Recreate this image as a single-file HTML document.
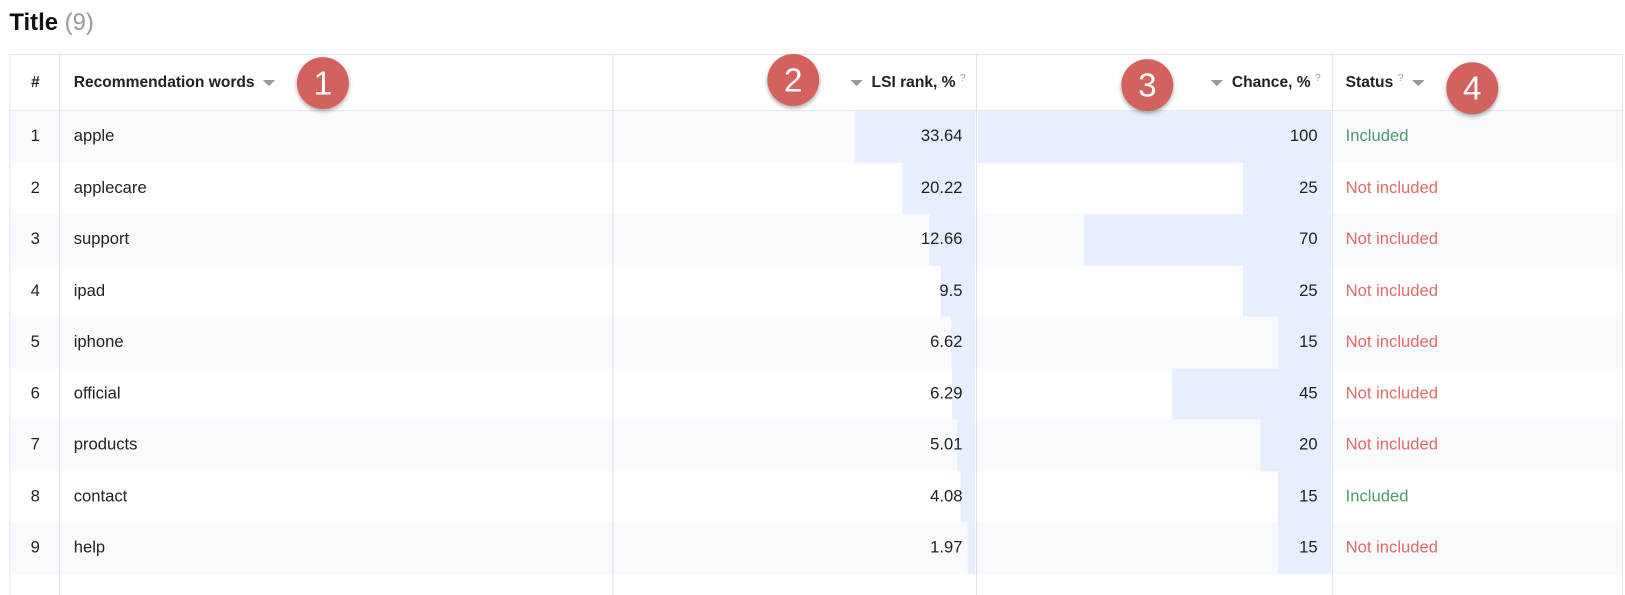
<!DOCTYPE html>
<html><head><meta charset="utf-8"><style>
body{margin:0;background:#fff;font-family:"Liberation Sans",Arial,sans-serif;width:1625px;height:568px;overflow:hidden;position:relative;color:#222}
#w{position:absolute;left:0;top:0;width:1565px;height:547px;transform:scale(1.0383);transform-origin:0 0}
.t{position:absolute;left:9px;top:8px;font-size:23px;font-weight:bold;color:#111}
.t span{color:#999;font-weight:normal}
.tb{position:absolute;left:9px;top:52px;width:1552px;height:520px;border:1px solid #dde4ef;border-bottom:none}
.hd{position:absolute;left:0;top:0;width:1552px;height:53px;border-bottom:2px solid #e3e9f3;font-size:15px;font-weight:bold;color:#222}
.vl{position:absolute;top:0;width:1px;height:520px;background:#dde4ef}
.row{position:absolute;left:0;width:1552px;height:49.5px;font-size:16px}
.row.o{background:#f8fafe}
.c{position:absolute;top:0;height:100%;line-height:49px}
.bar{position:absolute;top:0;height:100%;background:#e7eefd}
.tri{display:inline-block;width:0;height:0;border-left:6px solid transparent;border-right:6px solid transparent;border-top:6px solid #999;vertical-align:middle;margin:0 4px}
sup{color:#999;font-size:10px;font-weight:normal;line-height:0}
.bd{position:absolute;width:50px;height:50px;border-radius:50%;background:#d3625f;color:#fff;font-size:32px;text-align:center;line-height:50px;box-shadow:0 2px 4px rgba(0,0,0,.35)}
.g{color:#4f9a6b}.r{color:#e06a6a}
</style></head><body><div id="w">
<div class="t">Title <span>(9)</span></div>
<div class="tb">
<div class="hd">
<div class="c" style="left:0;width:48px;text-align:center;line-height:53px">#</div>
<div class="c" style="left:61px;line-height:53px">Recommendation words <span class="tri"></span></div>
<div class="c" style="right:632px;line-height:53px"><span class="tri"></span> LSI rank, % <sup>?</sup></div>
<div class="c" style="right:290px;line-height:53px"><span class="tri"></span> Chance, % <sup>?</sup></div>
<div class="c" style="left:1286px;line-height:53px">Status <sup>?</sup> <span class="tri"></span></div>
</div>
<div id="rows"></div>
<div class="vl" style="left:47px"></div>
<div class="vl" style="left:580px"></div>
<div class="vl" style="left:930px"></div>
<div class="vl" style="left:1273px"></div>
</div>
<div class="bd" style="left:286px;top:55px">1</div>
<div class="bd" style="left:739px;top:52px">2</div>
<div class="bd" style="left:1080px;top:57px">3</div>
<div class="bd" style="left:1393px;top:60px">4</div>
</div>
<script>
var d=[["apple",33.64,100,1],["applecare",20.22,25,0],["support",12.66,70,0],["ipad",9.5,25,0],["iphone",6.62,15,0],["official",6.29,45,0],["products",5.01,20,0],["contact",4.08,15,1],["help",1.97,15,0]];
var h="";d.forEach(function(r,i){var top=54+i*49.5;
h+='<div class="row'+(i%2==0?' o':'')+'" style="top:'+top+'px">'+
'<div class="bar" style="left:'+(929-r[1]*3.45)+'px;width:'+(r[1]*3.45)+'px"></div>'+
'<div class="bar" style="left:'+(1272-r[2]*3.4)+'px;width:'+(r[2]*3.4)+'px"></div>'+
'<div class="c" style="left:0;width:48px;text-align:center">'+(i+1)+'</div>'+
'<div class="c" style="left:61px">'+r[0]+'</div>'+
'<div class="c" style="right:635px">'+r[1]+'</div>'+
'<div class="c" style="right:293px">'+r[2]+'</div>'+
'<div class="c '+(r[3]?'g':'r')+'" style="left:1286px">'+(r[3]?'Included':'Not included')+'</div></div>';});
document.getElementById('rows').innerHTML=h;
</script>
</body></html>
